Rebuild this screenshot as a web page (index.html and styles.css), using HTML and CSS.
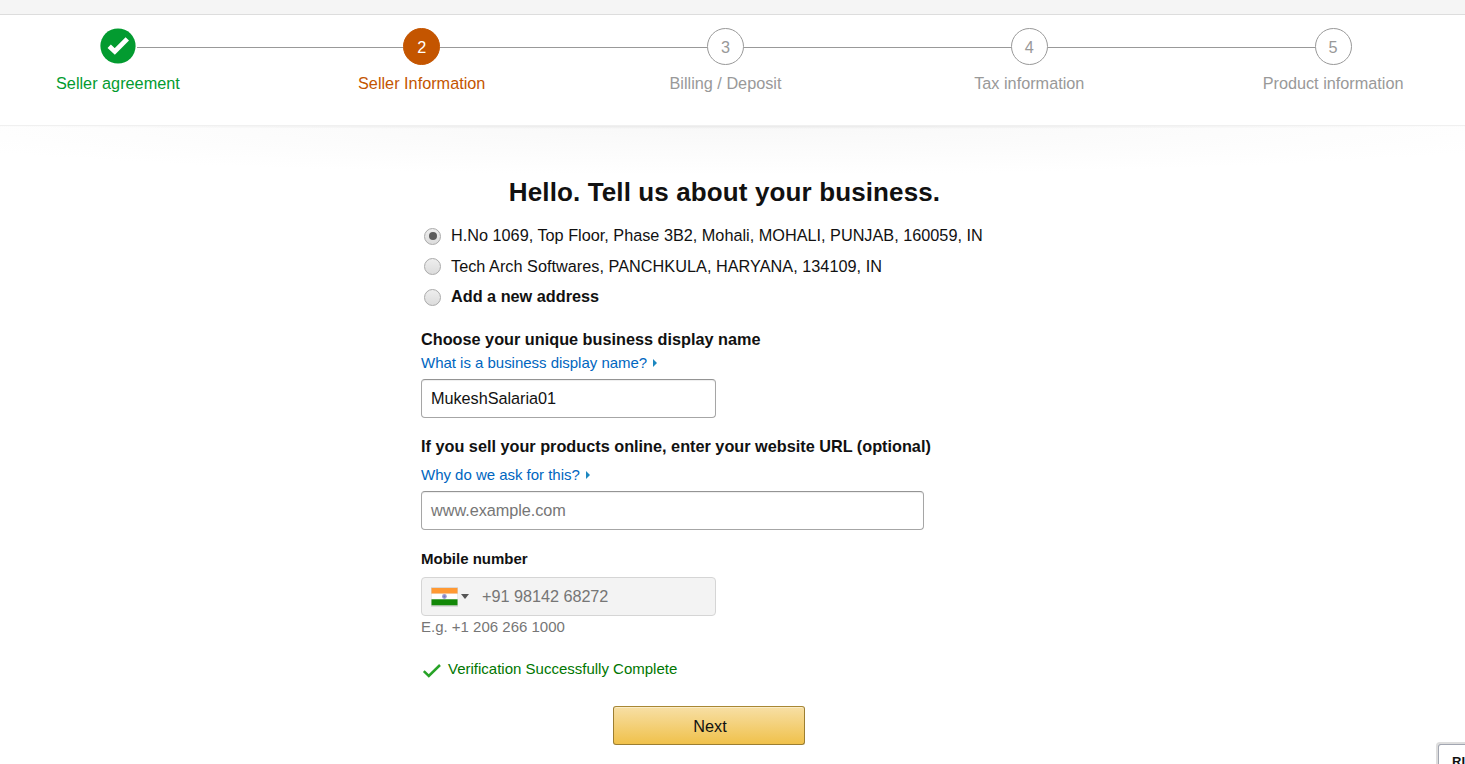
FILE: index.html
```html
<!DOCTYPE html>
<html lang="en">
<head>
<meta charset="utf-8">
<title>Seller Information</title>
<link rel="stylesheet" href="styles.css">
</head>
<body>
<header class="topbar"></header>
<nav class="steps">
  <div class="step done">
    <div class="track"><i class="line hidden"></i>
      <svg class="tick" viewBox="0 0 36 36"><circle cx="18" cy="18" r="17.6" fill="#039b30"/><path d="M9.2 18.2L14.8 23.5L27.3 10.9" fill="none" stroke="#fff" stroke-width="4.8"/></svg>
      <i class="line"></i></div>
    <span class="label">Seller agreement</span>
  </div>
  <div class="step current">
    <div class="track"><i class="line"></i><b class="num">2</b><i class="line"></i></div>
    <span class="label">Seller Information</span>
  </div>
  <div class="step">
    <div class="track"><i class="line"></i><b class="num">3</b><i class="line"></i></div>
    <span class="label">Billing / Deposit</span>
  </div>
  <div class="step">
    <div class="track"><i class="line"></i><b class="num">4</b><i class="line"></i></div>
    <span class="label">Tax information</span>
  </div>
  <div class="step">
    <div class="track"><i class="line"></i><b class="num">5</b><i class="line hidden"></i></div>
    <span class="label">Product information</span>
  </div>
</nav>
<div class="shade"></div>
<main class="form">
  <h1 class="title">Hello. Tell us about your business.</h1>
  <div class="addresses">
    <label class="address"><i class="radio on"></i><span>H.No 1069, Top Floor, Phase 3B2, Mohali, MOHALI, PUNJAB, 160059, IN</span></label>
    <label class="address second"><i class="radio"></i><span>Tech Arch Softwares, PANCHKULA, HARYANA, 134109, IN</span></label>
    <label class="address new"><i class="radio"></i><span>Add a new address</span></label>
  </div>
  <section class="field name">
    <h2 class="heading">Choose your unique business display name</h2>
    <a class="link"><span>What is a business display name?</span><i class="caret"></i></a>
    <div class="input short"><span>MukeshSalaria01</span></div>
  </section>
  <section class="field site">
    <h2 class="heading">If you sell your products online, enter your website URL (optional)</h2>
    <a class="link"><span>Why do we ask for this?</span><i class="caret"></i></a>
    <div class="input long"><span class="placeholder">www.example.com</span></div>
  </section>
  <section class="field phone">
    <h2 class="heading small">Mobile number</h2>
    <div class="input short disabled">
      <svg class="flag" viewBox="0 0 27 20"><path fill="#d9d9d9" d="M0 0h27v20H0z"/><path fill="#f93" d="M.5 1h26v5.7h-26z"/><path fill="#fff" d="M.5 6.7h26v5.6h-26z"/><path fill="#128807" d="M.5 12.3h26v6h-26z"/><circle cx="13.4" cy="9.5" r="2.4" fill="#9b9bd0"/><circle cx="13.4" cy="9.5" r="1" fill="#7777be"/></svg>
      <i class="drop"></i><span class="number">+91 98142 68272</span>
    </div>
    <p class="hint">E.g. +1 206 266 1000</p>
  </section>
  <p class="verified"><svg class="check" viewBox="0 0 20 16"><path d="M1.8 8.2L6.8 13L18 2" fill="none" stroke="#27a327" stroke-width="2.5"/></svg><span>Verification Successfully Complete</span></p>
  <div class="actions"><button class="next">Next</button></div>
</main>
<aside class="feedback">RI</aside>
</body>
</html>
```
FILE: styles.css
```css
* { box-sizing: border-box; }
body { margin: 0; height: 764px; overflow: hidden; background: #fff; color: #111; font: 16.25px/20px "Liberation Sans", Arial, sans-serif; }
h1, h2, p { margin: 0; }
.topbar { height: 15px; background: #f5f5f5; border-bottom: 1px solid #ddd; }
.steps { display: flex; width: 1519px; height: 110px; margin-left: -34px; padding-top: 13px; }
.step { flex: 1; display: flex; flex-direction: column; align-items: center; color: #999; }
.track { display: flex; align-items: center; width: 100%; height: 37px; }
.line { flex: 1; height: 1px; margin-top: 2px; background: #999; }
.hidden { visibility: hidden; }
.num { width: 37px; height: 37px; border: 1px solid #999; border-radius: 50%; font-weight: 400; line-height: 36px; text-align: center; }
.tick { width: 36px; height: 36px; margin: 0 1px 1px; }
.label { margin-top: 8px; white-space: nowrap; }
.done { color: #039b30; }
.current { color: #c45500; }
.current .num { color: #fff; background: #c45500; border-color: #c45500; }
.shade { height: 50px; background: radial-gradient(ellipse 55% 3px at 50% 0, #e9e9e9, transparent), radial-gradient(ellipse 60% 100% at 50% 0, #f8f8f8, #fff); border-top: 1px solid #f0f0f0; }
.form { width: 608px; margin-left: 421px; }
.title { margin-right: 1px; text-align: center; font-size: 26px; line-height: 34px; letter-spacing: 0.12px; }
.addresses { margin-top: 11px; }
.address { display: flex; align-items: center; height: 30.5px; margin-left: 3px; gap: 10px; white-space: nowrap; }
.radio { display: flex; align-items: center; justify-content: center; width: 17px; height: 17px; margin-top: 2px; border: 1px solid #aaa; border-radius: 50%; background: linear-gradient(#eee, #dcdcdc); }
.radio.on::after { content: ""; width: 8px; height: 8px; border-radius: 50%; background: #5c5c5c; }
.second { letter-spacing: 0.02px; }
.new { font-weight: 700; }
.heading { font-size: 16.25px; line-height: 20px; white-space: nowrap; }
.field.name { margin-top: 17px; }
.link { display: flex; align-items: center; height: 20px; margin-top: 4px; gap: 6px; color: #0066c0; font-size: 15px; letter-spacing: -0.02px; }
.caret { border-left: 4px solid #1c87c0; border-top: 4px solid transparent; border-bottom: 4px solid transparent; }
.input { display: flex; align-items: center; height: 39px; margin-top: 6px; padding-left: 9px; border: 1px solid #a6a6a6; border-top-color: #949494; border-radius: 4px; box-shadow: inset 0 1px 1px #eee; letter-spacing: -0.04px; }
.short { width: 295px; }
.long { width: 503px; }
.field.site { margin-top: 18px; }
.site .link { margin-top: 9px; }
.placeholder, .number, .hint { color: #767676; }
.field.phone { margin-top: 19px; }
.heading.small { font-size: 15px; }
.disabled { margin-top: 8px; border-color: #d5d5d5; background: #f3f3f3; box-shadow: none; }
.flag { width: 27px; height: 20px; margin-top: 1px; }
.drop { margin-left: 3px; border-top: 5px solid #555; border-left: 4px solid transparent; border-right: 4px solid transparent; }
.number { margin-left: 13px; }
.hint { margin-top: 1px; font-size: 15px; }
.verified { display: flex; align-items: center; margin-top: 22px; height: 20px; color: #007600; font-size: 15px; }
.check { width: 20px; height: 16px; margin: 4px 6px 0 1px; }
.actions { margin: 27px 0 0 192px; }
.next { display: block; width: 192px; height: 39px; padding: 2px 0 0 2px; border: 1px solid #9c7e31; border-top-color: #a88734; border-radius: 3px; background: linear-gradient(#f7dfa5, #f0c14b); box-shadow: inset 0 1px 0 #fbecc5; font: inherit; color: #111; }
.feedback { position: absolute; left: 1436px; top: 742px; width: 29px; height: 22px; overflow: hidden; padding: 8px 0 0 14px; border: solid #ddd; border-width: 2px 0 0 2px; border-radius: 4px 0 0 0; background: #fff; box-shadow: inset 1px 1px 0 #a2a6b1; font-size: 13px; font-weight: 700; white-space: nowrap; }
```
